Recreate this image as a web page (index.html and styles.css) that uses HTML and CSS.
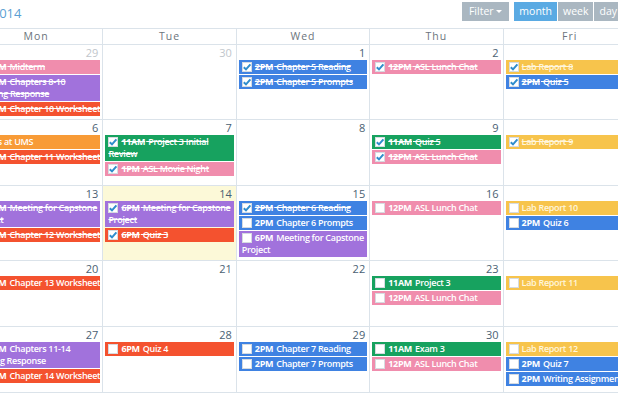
FILE: index.html
```html
<!DOCTYPE html>
<html lang="en">
<head>
    <meta charset="UTF-8">
    <title>Calendar</title>
    <link rel="stylesheet" href="styles.css">
</head>
<body>
    <div class="toolbar">
        <h2 class="title">October 2014</h2>
        <div class="buttons">
            <button class="btn filter">Filter <span class="caret"></span></button>
            <div class="group">
                <button class="btn active">month</button>
                <button class="btn">week</button>
                <button class="btn">day</button>
            </div>
        </div>
    </div>

    <div class="calendar">
        <div class="head">
            <div>Mon</div><div>Tue</div><div>Wed</div><div>Thu</div><div>Fri</div>
        </div>

        <!-- week 1 -->
        <div class="week">
            <div class="day other">
                <div class="num">29</div>
                <div class="ev pink done"><span class="cb"><svg viewBox="0 0 10 10"><path d="M1.8 5.2l2.2 2.2 4.4-5"/></svg></span><b>2PM</b> Midterm</div>
                <div class="ev purple done"><span class="cb"><svg viewBox="0 0 10 10"><path d="M1.8 5.2l2.2 2.2 4.4-5"/></svg></span><b>1PM</b> Chapters 8-10 Reading Response</div>
                <div class="ev red done"><span class="cb"><svg viewBox="0 0 10 10"><path d="M1.8 5.2l2.2 2.2 4.4-5"/></svg></span><b>2PM</b> Chapter 10 Worksheet</div>
            </div>
            <div class="day other">
                <div class="num">30</div>
            </div>
            <div class="day">
                <div class="num">1</div>
                <div class="ev blue done"><span class="cb"><svg viewBox="0 0 10 10"><path d="M1.8 5.2l2.2 2.2 4.4-5"/></svg></span><b>2PM</b> Chapter 5 Reading</div>
                <div class="ev blue done"><span class="cb"><svg viewBox="0 0 10 10"><path d="M1.8 5.2l2.2 2.2 4.4-5"/></svg></span><b>2PM</b> Chapter 5 Prompts</div>
            </div>
            <div class="day">
                <div class="num">2</div>
                <div class="ev pink done"><span class="cb"><svg viewBox="0 0 10 10"><path d="M1.8 5.2l2.2 2.2 4.4-5"/></svg></span><b>12PM</b> ASL Lunch Chat</div>
            </div>
            <div class="day">
                <div class="num">3</div>
                <div class="ev yellow done"><span class="cb"><svg viewBox="0 0 10 10"><path d="M1.8 5.2l2.2 2.2 4.4-5"/></svg></span>Lab Report 8</div>
                <div class="ev blue done"><span class="cb"><svg viewBox="0 0 10 10"><path d="M1.8 5.2l2.2 2.2 4.4-5"/></svg></span><b>2PM</b> Quiz 5</div>
            </div>
        </div>

        <!-- week 2 -->
        <div class="week">
            <div class="day">
                <div class="num">6</div>
                <div class="ev orange">Events at UMS</div>
                <div class="ev red done"><span class="cb"><svg viewBox="0 0 10 10"><path d="M1.8 5.2l2.2 2.2 4.4-5"/></svg></span><b>2PM</b> Chapter 11 Worksheet</div>
            </div>
            <div class="day">
                <div class="num">7</div>
                <div class="ev green done"><span class="cb"><svg viewBox="0 0 10 10"><path d="M1.8 5.2l2.2 2.2 4.4-5"/></svg></span><b>11AM</b> Project 3 Initial Review</div>
                <div class="ev pink done"><span class="cb"><svg viewBox="0 0 10 10"><path d="M1.8 5.2l2.2 2.2 4.4-5"/></svg></span><b>1PM</b> ASL Movie Night</div>
            </div>
            <div class="day">
                <div class="num">8</div>
            </div>
            <div class="day">
                <div class="num">9</div>
                <div class="ev green done"><span class="cb"><svg viewBox="0 0 10 10"><path d="M1.8 5.2l2.2 2.2 4.4-5"/></svg></span><b>11AM</b> Quiz 5</div>
                <div class="ev pink done"><span class="cb"><svg viewBox="0 0 10 10"><path d="M1.8 5.2l2.2 2.2 4.4-5"/></svg></span><b>12PM</b> ASL Lunch Chat</div>
            </div>
            <div class="day">
                <div class="num">10</div>
                <div class="ev yellow done"><span class="cb"><svg viewBox="0 0 10 10"><path d="M1.8 5.2l2.2 2.2 4.4-5"/></svg></span>Lab Report 9</div>
            </div>
        </div>

        <!-- week 3 -->
        <div class="week">
            <div class="day">
                <div class="num">13</div>
                <div class="ev purple done"><span class="cb"><svg viewBox="0 0 10 10"><path d="M1.8 5.2l2.2 2.2 4.4-5"/></svg></span><b>6PM</b> Meeting for Capstone Project</div>
                <div class="ev red done"><span class="cb"><svg viewBox="0 0 10 10"><path d="M1.8 5.2l2.2 2.2 4.4-5"/></svg></span><b>2PM</b> Chapter 12 Worksheet</div>
            </div>
            <div class="day today">
                <div class="num">14</div>
                <div class="ev purple done"><span class="cb"><svg viewBox="0 0 10 10"><path d="M1.8 5.2l2.2 2.2 4.4-5"/></svg></span><b>6PM</b> Meeting for Capstone Project</div>
                <div class="ev red done"><span class="cb"><svg viewBox="0 0 10 10"><path d="M1.8 5.2l2.2 2.2 4.4-5"/></svg></span><b>6PM</b> Quiz 3</div>
            </div>
            <div class="day">
                <div class="num">15</div>
                <div class="ev blue done"><span class="cb"><svg viewBox="0 0 10 10"><path d="M1.8 5.2l2.2 2.2 4.4-5"/></svg></span><b>2PM</b> Chapter 6 Reading</div>
                <div class="ev blue"><span class="cb"></span><b>2PM</b> Chapter 6 Prompts</div>
                <div class="ev purple"><span class="cb"></span><b>6PM</b> Meeting for Capstone Project</div>
            </div>
            <div class="day">
                <div class="num">16</div>
                <div class="ev pink"><span class="cb"></span><b>12PM</b> ASL Lunch Chat</div>
            </div>
            <div class="day">
                <div class="num">17</div>
                <div class="ev yellow"><span class="cb"></span>Lab Report 10</div>
                <div class="ev blue"><span class="cb"></span><b>2PM</b> Quiz 6</div>
            </div>
        </div>

        <!-- week 4 -->
        <div class="week">
            <div class="day">
                <div class="num">20</div>
                <div class="ev red"><span class="cb"></span><b>2PM</b> Chapter 13 Worksheet</div>
            </div>
            <div class="day">
                <div class="num">21</div>
            </div>
            <div class="day">
                <div class="num">22</div>
            </div>
            <div class="day">
                <div class="num">23</div>
                <div class="ev green"><span class="cb"></span><b>11AM</b> Project 3</div>
                <div class="ev pink"><span class="cb"></span><b>12PM</b> ASL Lunch Chat</div>
            </div>
            <div class="day">
                <div class="num">24</div>
                <div class="ev yellow"><span class="cb"></span>Lab Report 11</div>
            </div>
        </div>

        <!-- week 5 -->
        <div class="week">
            <div class="day">
                <div class="num">27</div>
                <div class="ev purple"><span class="cb"></span><b>2PM</b> Chapters 11-14 Writing Response</div>
                <div class="ev red"><span class="cb"></span><b>2PM</b> Chapter 14 Worksheet</div>
            </div>
            <div class="day">
                <div class="num">28</div>
                <div class="ev red"><span class="cb"></span><b>6PM</b> Quiz 4</div>
            </div>
            <div class="day">
                <div class="num">29</div>
                <div class="ev blue"><span class="cb"></span><b>2PM</b> Chapter 7 Reading</div>
                <div class="ev blue"><span class="cb"></span><b>2PM</b> Chapter 7 Prompts</div>
            </div>
            <div class="day">
                <div class="num">30</div>
                <div class="ev green"><span class="cb"></span><b>11AM</b> Exam 3</div>
                <div class="ev pink"><span class="cb"></span><b>12PM</b> ASL Lunch Chat</div>
            </div>
            <div class="day">
                <div class="num">31</div>
                <div class="ev yellow"><span class="cb"></span>Lab Report 12</div>
                <div class="ev blue"><span class="cb"></span><b>2PM</b> Quiz 7</div>
                <div class="ev blue"><span class="cb"></span><b>2PM</b> Writing Assignment</div>
            </div>
        </div>
    </div>
</body>
</html>
```

FILE: styles.css
```css
body {
    margin: 0;
    width: 618px;
    height: 394px;
    overflow: hidden;
    background: #fff;
    font-family: "Open Sans", "Noto Sans", sans-serif;
}

.toolbar {
    width: 622px;
    height: 28px;
    display: flex;
    justify-content: space-between;
    align-items: center;
}

.title {
    margin: 0 0 2px -61px;
    font-size: 13px;
    font-weight: 400;
    color: #5b9fd3;
}

.buttons {
    display: flex;
    align-items: center;
    gap: 5px;
    margin-top: -5px;
}

.group {
    display: flex;
    gap: 1px;
}

.btn {
    height: 19px;
    padding: 0 5px;
    border: none;
    background: #aab7c1;
    color: #fff;
    font-family: "Open Sans", sans-serif;
    font-size: 10.5px;
    line-height: 19px;
}

.btn.filter {
    padding: 0 7px;
}

.btn.active {
    background: #5aaae3;
}

.caret {
    display: inline-block;
    width: 0;
    height: 0;
    border-left: 3px solid transparent;
    border-right: 3px solid transparent;
    border-top: 3px solid #fff;
    vertical-align: 2px;
}

.calendar {
    margin-left: -30px;
    width: 667px;
}

.head {
    display: grid;
    grid-template-columns: repeat(5, 1fr);
    border-top: 1px solid #dbe3ea;
    border-bottom: 1px solid #dbe3ea;
}

.head div {
    height: 15px;
    line-height: 15px;
    text-align: center;
    font-size: 10.5px;
    letter-spacing: 1px;
    color: #6b747c;
    border-right: 1px solid #dbe3ea;
}

.week {
    display: grid;
    grid-template-columns: repeat(5, 1fr);
    min-height: 65px;
    border-bottom: 1px solid #dbe3ea;
}

.day {
    border-right: 1px solid #dbe3ea;
    padding-bottom: 2px;
    overflow: hidden;
}

.day.today {
    background: #fcf9d8;
}

.num {
    height: 15px;
    padding: 1px 4px 0 0;
    box-sizing: border-box;
    text-align: right;
    font-size: 11px;
    line-height: 13px;
    color: #4a5f73;
}

.day.other .num {
    color: #c1c6cb;
}

.ev {
    margin: 0 2px 1px 2px;
    padding: 1px 1px 1px 3px;
    font-size: 9px;
    line-height: 12px;
    letter-spacing: -0.3px;
    font-weight: 600;
    color: #fff;
    white-space: nowrap;
}

.ev.purple,
.ev.green {
    white-space: normal;
}

.ev b {
    font-weight: 700;
    margin-right: 1px;
}

.ev.done {
    text-decoration: line-through;
}

.cb {
    display: inline-block;
    width: 10px;
    height: 10px;
    margin-right: 3px;
    vertical-align: -2px;
    background: #fff;
    box-shadow: inset 0 0 0 1px #d6dbe0;
}

.cb svg {
    display: block;
    width: 10px;
    height: 10px;
}

.cb path {
    fill: none;
    stroke: #2f8dcc;
    stroke-width: 2;
}

.pink { background: #f08dad; }
.purple { background: #a172dc; }
.red { background: #f4522f; }
.blue { background: #3f82e2; }
.green { background: #17a25f; }
.yellow { background: #f7c44c; color: #fff6dc; }
.orange { background: #f89b36; }
```
